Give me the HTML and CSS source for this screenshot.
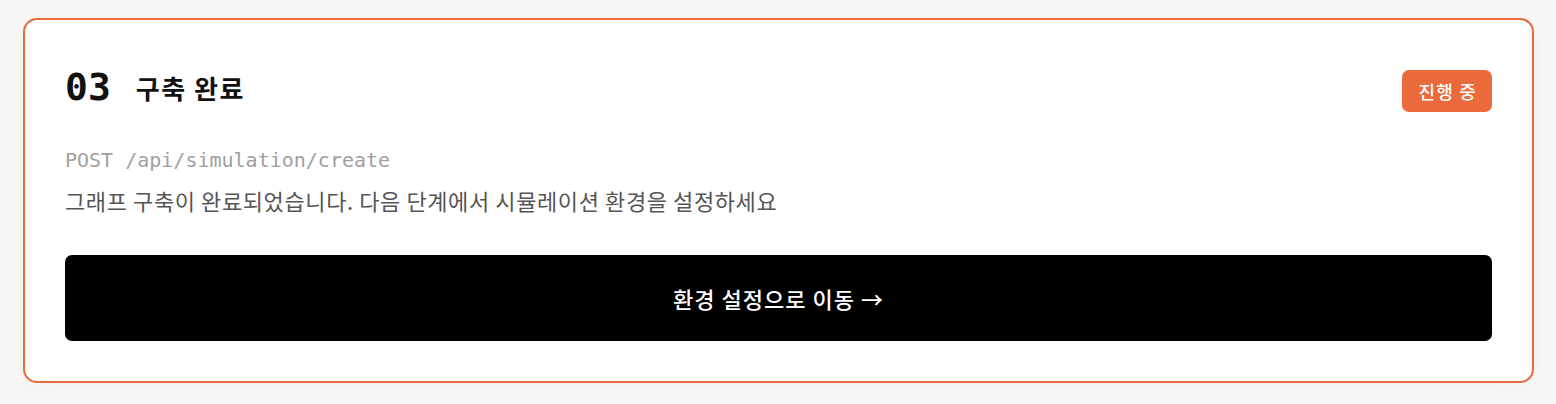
FILE: index.html
```html
<html>
<head>
	<meta charset="utf-8">
	<link rel="stylesheet" href="styles.css">
</head>
<body>

	<div class="step">
		<div class="step-head">
			<div class="step-title">
				<span class="num">03</span>
				<h2>구축 완료</h2>
			</div>
			<span class="badge">진행 중</span>
		</div>

		<div class="endpoint">POST /api/simulation/create</div>
		<p class="desc">그래프 구축이 완료되었습니다. 다음 단계에서 시뮬레이션 환경을 설정하세요</p>

		<a class="go" href="#">환경 설정으로 이동 →</a>
	</div>

</body>
</html>
```

FILE: styles.css
```css
body {
	margin: 0;
	padding: 18px 22px 20px 23px;
	background: #faf8f6;
	font-family: "Noto Sans CJK KR", "Noto Sans", sans-serif;
	color: #111;
}

.step {
	background: #fff;
	border: 2px solid #ea6a3c;
	border-radius: 14px;
	padding: 40px;
	box-shadow: 0 4px 20px rgba(0, 0, 0, 0.04);
}

.step-head {
	display: flex;
	justify-content: space-between;
	align-items: flex-start;
}

.step-title {
	display: flex;
	align-items: center;
	gap: 25px;
}

.num {
	font-family: "DejaVu Sans Mono", monospace;
	font-weight: bold;
	font-size: 38px;
	line-height: 54px;
}

.step-title h2 {
	margin: 0;
	font-size: 26px;
	font-weight: 600;
	letter-spacing: 1.5px;
}

.badge {
	margin-top: 10px;
	background: #ea6a3c;
	color: #fff;
	font-size: 18px;
	font-weight: 500;
	letter-spacing: 1.2px;
	line-height: 22px;
	padding: 10px 15px 10px 16px;
	border-radius: 7px;
}

.endpoint {
	margin-top: 34px;
	font-family: "DejaVu Sans Mono", monospace;
	font-size: 20px;
	line-height: 24px;
	color: #a0a0a0;
}

.desc {
	margin: 13px 0 0;
	font-size: 22px;
	letter-spacing: 0.6px;
	line-height: 30px;
	color: #555;
}

.go {
	display: block;
	margin-top: 40px;
	height: 86px;
	line-height: 86px;
	background: #000;
	color: #fff;
	text-align: center;
	text-decoration: none;
	font-size: 22px;
	font-weight: 500;
	letter-spacing: 1px;
	border-radius: 7px;
}
```
